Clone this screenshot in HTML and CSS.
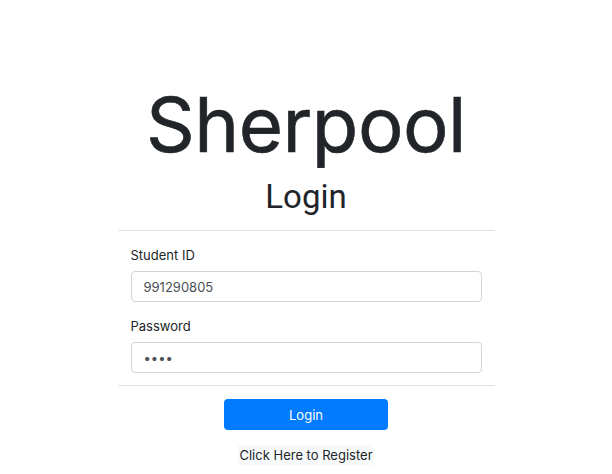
FILE: index.html
```html
<!DOCTYPE html>
<html>
<head>
<meta charset="utf-8">
<link rel="stylesheet" href="styles.css">
</head>
<body>
<main class="page">
  <h1 class="brand">Sherpool</h1>
  <h2 class="title">Login</h2>
  <div class="card">
    <form class="form">
      <label class="label" for="sid">Student ID</label>
      <input class="input" id="sid" type="text" value="991290805">
      <label class="label" for="pw">Password</label>
      <input class="input" id="pw" type="password" value="abcd">
    </form>
    <div class="actions">
      <button class="btn" type="button">Login</button>
      <a class="register" href="#">Click Here to Register</a>
    </div>
  </div>
</main>
</body>
</html>
```
FILE: styles.css
```css
html, body {
  margin: 0;
  padding: 0;
  background: #ffffff;
}
body {
  font-family: Inter, "Noto Sans", sans-serif;
  color: #212529;
}
.page {
  display: flex;
  flex-direction: column;
  align-items: center;
  padding-top: 80px;
}
.brand {
  margin: 0;
  font-family: Inter, sans-serif;
  font-weight: 400;
  font-size: 76px;
  line-height: 88px;
  letter-spacing: -0.5px;
  color: #212529;
  -webkit-text-stroke: 0.6px #212529;
}
.title {
  margin: 6px 0 0;
  font-family: Roboto, sans-serif;
  font-weight: 400;
  font-size: 33px;
  line-height: 46px;
  color: #212529;
}
.card {
  width: 377px;
  margin-top: 10px;
  border-top: 1px solid #dee2e6;
}
.form {
  display: flex;
  flex-direction: column;
  padding: 14px 13px 12px;
  border-bottom: 1px solid #dee2e6;
}
.label {
  font-size: 13px;
  line-height: 20px;
  color: #212529;
  margin-bottom: 6px;
}
.input {
  box-sizing: border-box;
  height: 31px;
  padding: 0 12px;
  border: 1px solid #ced4da;
  border-radius: 4px;
  font-family: Inter, sans-serif;
  font-size: 13px;
  color: #495057;
  margin-bottom: 14px;
}
.input:last-child {
  margin-bottom: 0;
}
.actions {
  display: flex;
  flex-direction: column;
  align-items: center;
  padding-top: 13px;
}
.btn {
  width: 164px;
  height: 31px;
  border: none;
  border-radius: 4px;
  background: #007bff;
  color: #ffffff;
  font-family: Inter, sans-serif;
  font-size: 13px;
}
.register {
  margin-top: 15px;
  padding: 2px 1px;
  background: #f8f9fa;
  color: #212529;
  text-decoration: none;
  font-size: 13px;
  line-height: 16px;
}
```
